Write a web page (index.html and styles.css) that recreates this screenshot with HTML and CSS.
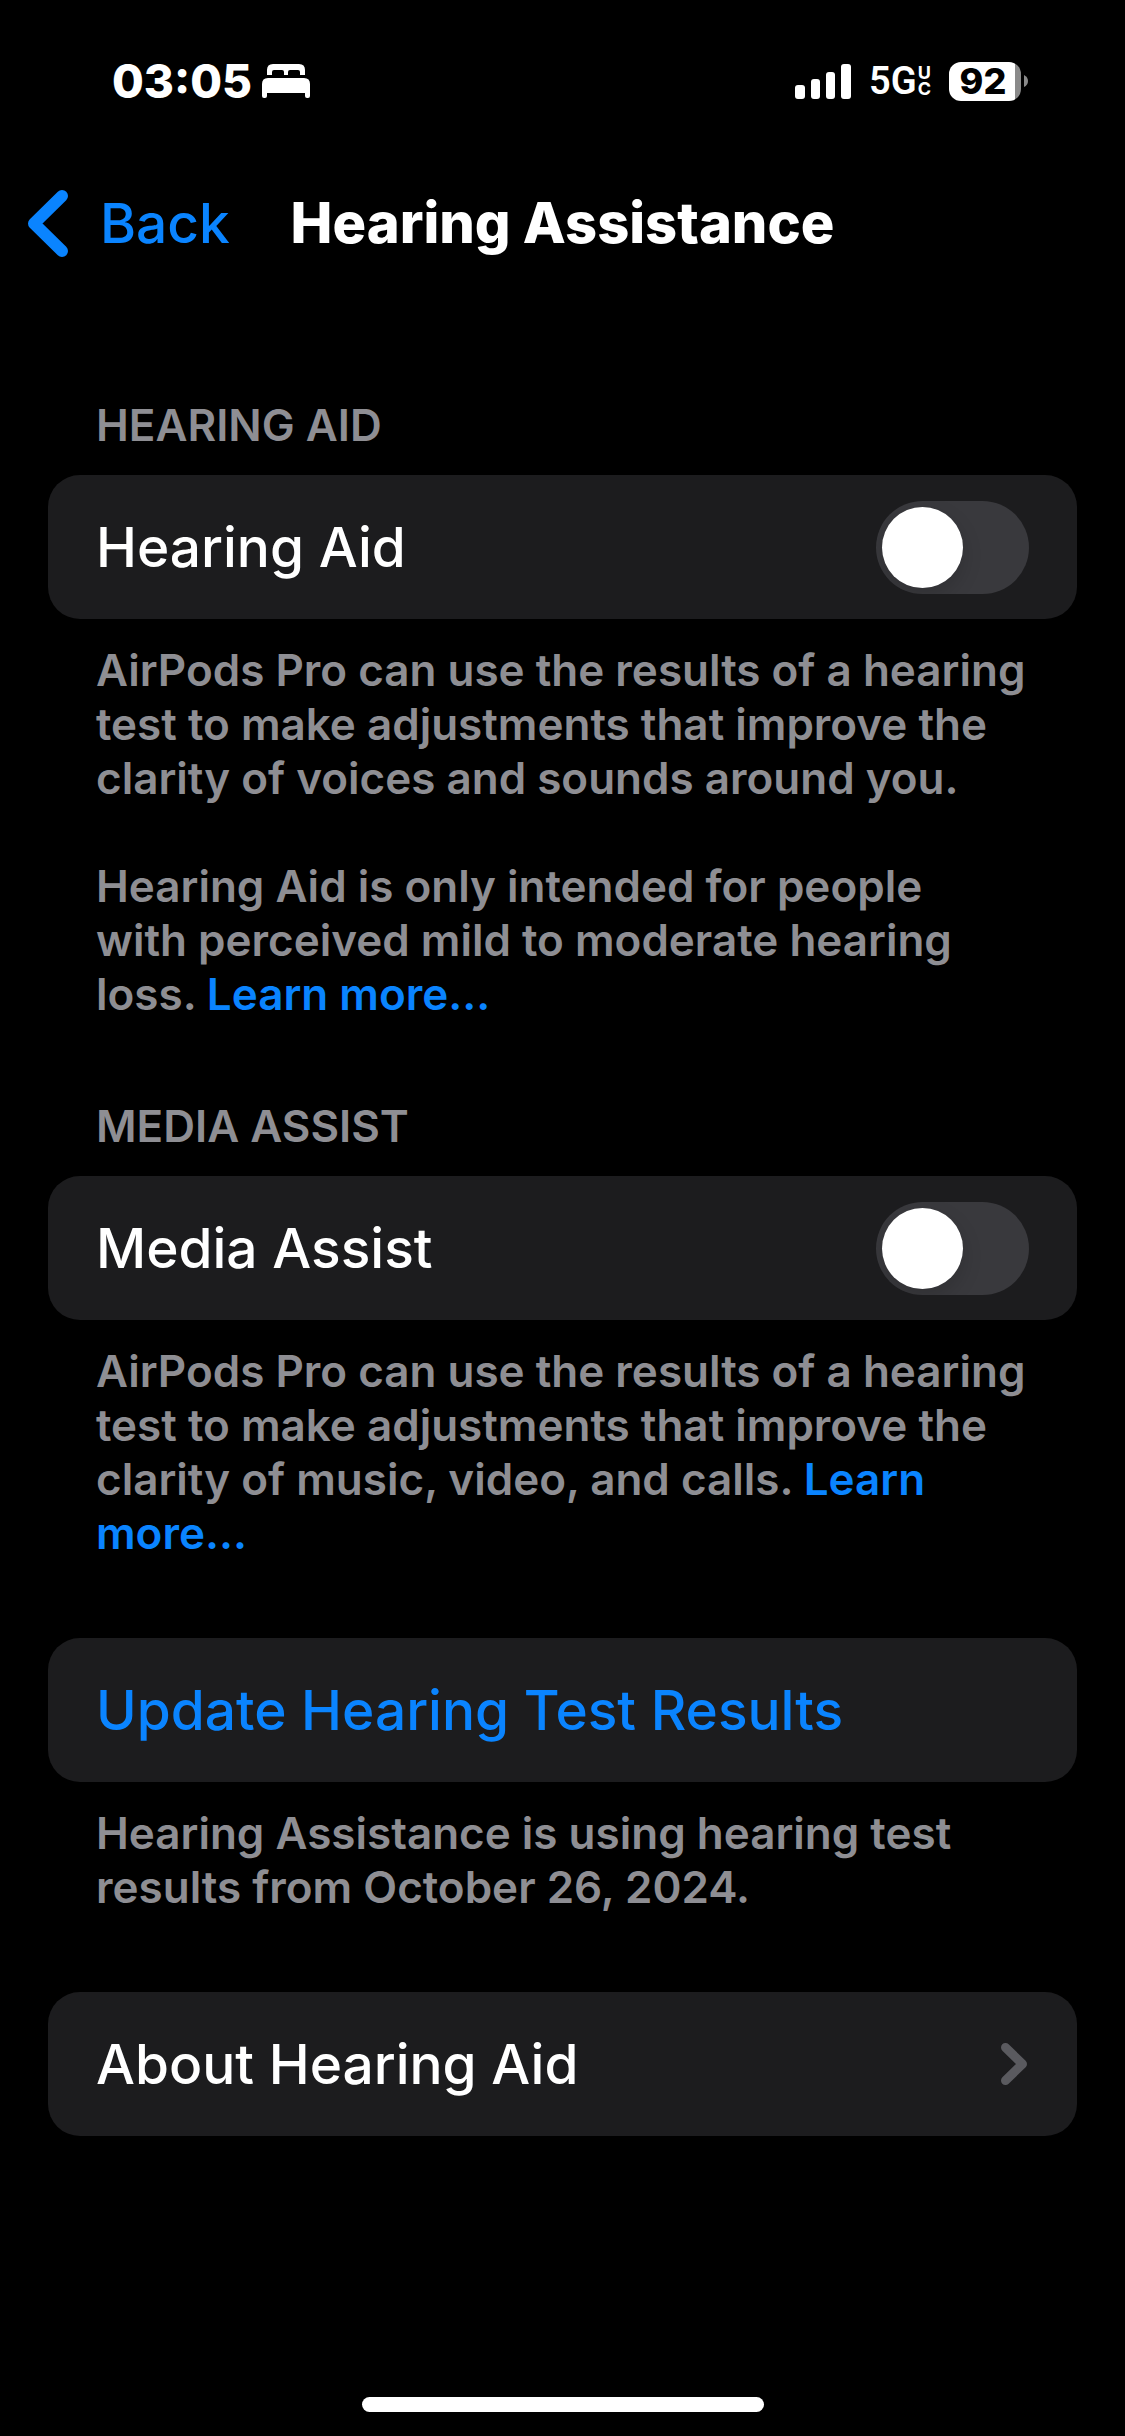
FILE: index.html
```html
<!DOCTYPE html>
<html lang="en">
<head>
<meta charset="utf-8">
<meta name="viewport" content="width=device-width, initial-scale=1">
<title>Hearing Assistance</title>
<link rel="stylesheet" href="styles.css">
</head>
<body>
<div class="screen">
  <header class="status">
    <div class="status-side">
      <span class="time">03:05</span>
      <svg class="bed" viewBox="0 0 48 34" width="48" height="34" aria-hidden="true">
        <path fill="#fff" d="M5 11V6q0-6 6-6h26q6 0 6 6v5h-5V8q0-2-2-2h-8q-2 0-2 2v3h-4V8q0-2-2-2h-8q-2 0-2 2v3zM0 20q0-6 6-6h36q6 0 6 6v12q0 2-2 2h-1q-2 0-2-2v-3H5v3q0 2-2 2H2q-2 0-2-2z"/>
      </svg>
    </div>
    <div class="status-side">
      <svg class="signal" viewBox="0 0 56 35" width="56" height="35" aria-hidden="true">
        <g fill="#fff"><rect x="0" y="21" width="10" height="14" rx="3"/><rect x="16" y="15" width="9" height="20" rx="3"/><rect x="31" y="8" width="9" height="27" rx="3"/><rect x="46" y="0" width="10" height="35" rx="3"/></g>
      </svg>
      <span class="network">5G<span class="network-tag"><span>U</span><span>C</span></span></span>
      <span class="battery"><span class="battery-level">92</span><svg viewBox="0 0 4 12" width="4" height="12" aria-hidden="true"><path fill="#8a8a8a" d="M0 0q4 2 4 6t-4 6z"/></svg></span>
    </div>
  </header>

  <nav class="nav">
    <a class="back" href="#">
      <svg viewBox="0 0 40 67" width="40" height="67" aria-hidden="true"><path d="M34 6L6 33.500L34 61" fill="none" stroke="#0a84ff" stroke-width="12" stroke-linecap="round" stroke-linejoin="round"/></svg>
      Back
    </a>
    <h1 class="title">Hearing Assistance</h1>
  </nav>

  <main class="content">
    <section class="group">
      <h2 class="heading">HEARING AID</h2>
      <label class="card">Hearing Aid <input class="toggle" type="checkbox" role="switch"></label>
      <div class="note">
        <p>AirPods Pro can use the results of a hearing test to make adjustments that improve the clarity of voices and sounds around you.</p>
        <p>Hearing Aid is only intended for people<br>with perceived mild to moderate hearing loss. <a href="#">Learn more...</a></p>
      </div>
    </section>

    <section class="group">
      <h2 class="heading">MEDIA ASSIST</h2>
      <label class="card">Media Assist <input class="toggle" type="checkbox" role="switch"></label>
      <div class="note">
        <p>AirPods Pro can use the results of a hearing test to make adjustments that improve the clarity of music, video, and calls. <a href="#">Learn more...</a></p>
      </div>
    </section>

    <section class="group">
      <button class="card card-action" type="button">Update Hearing Test Results</button>
      <div class="note">
        <p>Hearing Assistance is using hearing test results from October 26, 2024.</p>
      </div>
    </section>

    <section class="group">
      <a class="card" href="#">About Hearing Aid
        <svg viewBox="0 0 28 42" width="28" height="42" aria-hidden="true"><path d="M4.500 4.500L21.500 21L4.500 37.500" fill="none" stroke="#5a5a5f" stroke-width="9" stroke-linecap="round" stroke-linejoin="round"/></svg>
      </a>
    </section>
  </main>

  <div class="home-indicator"></div>
</div>
</body>
</html>
```
FILE: styles.css
```css
* { box-sizing: border-box; }

body {
  margin: 0;
  background: #000;
  color: #fff;
  font-family: Inter, "Liberation Sans", sans-serif;
  font-weight: 550;
}

h1, h2, p { margin: 0; }

a { color: #0a84ff; text-decoration: none; }

svg { display: block; flex: none; }

.screen {
  min-height: 100vh;
  display: flex;
  flex-direction: column;
}

/* Status bar */
.status {
  display: flex;
  justify-content: space-between;
  align-items: center;
  height: 162px;
  padding: 0 97px 0 112px;
}

.status-side {
  display: flex;
  align-items: center;
  gap: 10px;
}

.time {
  font-size: 46px;
  font-weight: 800;
  line-height: 54px;
}

.signal { margin-right: 8px; }

.network {
  display: flex;
  align-items: center;
  gap: 1px;
  margin-right: 8px;
  font: 600 38px/44px Roboto, sans-serif;
}

.network-tag {
  display: flex;
  flex-direction: column;
  font: 700 18px/16px Inter, sans-serif;
}

.battery {
  display: flex;
  align-items: center;
  gap: 3px;
}

.battery-level {
  width: 72px;
  border-radius: 12px;
  background: linear-gradient(90deg, #fff 92%, #8a8a8a 92%);
  color: #000;
  font-size: 36px;
  font-weight: 800;
  line-height: 39px;
  padding-right: 4px;
  text-align: center;
}

/* Navigation bar */
.nav {
  display: grid;
  grid-template-columns: 1fr auto 1fr;
  align-items: center;
  height: 122px;
  padding: 0 28px;
}

.back {
  display: flex;
  align-items: center;
  gap: 32px;
  font-size: 55px;
}

.title {
  font-size: 56px;
  font-weight: 800;
}

/* Settings list */
.content {
  display: flex;
  flex-direction: column;
  gap: 78px;
  padding: 114px 48px 78px;
}

.heading {
  padding: 0 48px;
  margin-bottom: 23px;
  color: #8e8e93;
  font-size: 44px;
  font-weight: 600;
  line-height: 54px;
}

.card {
  display: flex;
  justify-content: space-between;
  align-items: center;
  width: 100%;
  min-height: 144px;
  padding: 24px 48px;
  border: 0;
  border-radius: 32px;
  background: #1c1c1e;
  color: #fff;
  font: inherit;
  font-size: 55px;
  text-align: left;
}

.card-action { color: #0a84ff; }

.note {
  display: flex;
  flex-direction: column;
  gap: 54px;
  padding: 24px 36px 0 48px;
  color: #8e8e93;
  font-size: 44px;
  font-weight: 600;
  line-height: 54px;
}

.toggle {
  appearance: none;
  flex: none;
  display: flex;
  width: 153px;
  height: 93px;
  margin: 0;
  padding: 6px;
  border-radius: 47px;
  background: #39393d;
  overflow: hidden;
}

.toggle::before {
  content: "";
  width: 81px;
  height: 81px;
  border-radius: 50%;
  background: #fff;
  box-shadow: 0 8px 20px rgba(0, 0, 0, 0.15);
}

.toggle:checked { justify-content: flex-end; background: #30d158; }

.home-indicator {
  width: 402px;
  max-width: 60%;
  height: 15px;
  margin: auto auto 24px;
  border-radius: 8px;
  background: #fff;
}
```
